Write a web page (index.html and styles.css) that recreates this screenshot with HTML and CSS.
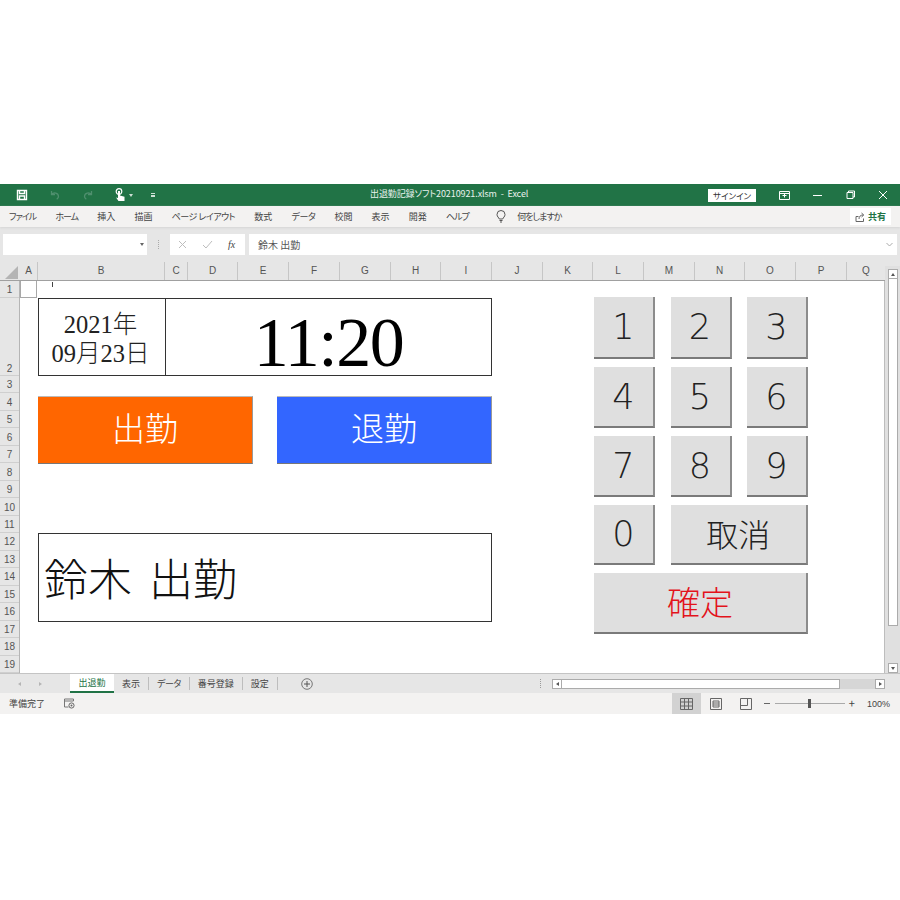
FILE: index.html
```html
<!DOCTYPE html>
<html lang="ja">
<head>
  <meta charset="UTF-8" />
  <title>出退勤記録ソフト</title>
  <link rel="stylesheet" href="styles.css">
</head>
<body>
  <div class="excel">
    <!-- Title bar -->
    <div class="titlebar">
      <div class="qat">
        <svg class="qat-save" width="12" height="12" viewBox="0 0 12 12"><path d="M1.5 1.5h9v9h-9z M3.5 1.5v3h5v-3 M3.5 10.5v-3.5h5v3.5" fill="none" stroke="#fff" stroke-width="1.4"/></svg>
        <svg class="qat-undo" width="12" height="12" viewBox="0 0 12 12"><path d="M2.5 2v3.5h3.5 M2.7 5.3c2-2.3 6.6-1.5 6.8 2 .1 1.500-.8 2.400-1.800 3" fill="none" stroke="#4f8f6e" stroke-width="1.300"/></svg>
        <svg class="qat-redo" width="12" height="12" viewBox="0 0 12 12"><path d="M9.500 2v3.500H6 M9.300 5.300c-2-2.300-6.600-1.500-6.800 2-.1 1.500.8 2.400 1.800 3" fill="none" stroke="#4f8f6e" stroke-width="1.300"/></svg>
        <svg class="qat-touch" width="12" height="14" viewBox="0 0 12 14"><circle cx="5" cy="3.500" r="2.800" fill="none" stroke="#fff" stroke-width="1.200"/><path d="M4 3h2v4.500l4.500 1.200V13H4.500L2 9.500l2 .6z" fill="#fff"/></svg>
        <span class="qat-caret"></span>
        <span class="qat-more"></span>
      </div>
      <div class="doc-title">出退勤記録ソフト20210921.xlsm&nbsp; -&nbsp; Excel</div>
      <div class="win-controls">
        <span class="signin">サインイン</span>
        <svg class="win-display" width="11" height="10" viewBox="0 0 11 10"><path d="M.5 1.500h10v8H.5z M.5 3.500h10 M5.500 3.500v4 M3.500 5.500h4" fill="none" stroke="#fff"/></svg>
        <svg class="win-min" width="10" height="10" viewBox="0 0 10 10"><path d="M0 5.500h9" stroke="#fff"/></svg>
        <svg class="win-restore" width="10" height="10" viewBox="0 0 10 10"><path d="M1 2.500h6v6H1z M2.500 2.500V1h6v6H7" fill="none" stroke="#fff"/></svg>
        <svg class="win-close" width="10" height="10" viewBox="0 0 10 10"><path d="M1 1l8 8M9 1L1 9" stroke="#fff"/></svg>
      </div>
    </div>

    <!-- Ribbon tabs -->
    <div class="ribbon">
      <a class="kana">ファイル</a>
      <a class="kana">ホーム</a>
      <a>挿入</a>
      <a>描画</a>
      <a class="kana-wide">ページ レイアウト</a>
      <a>数式</a>
      <a class="kana-wide">データ</a>
      <a>校閲</a>
      <a>表示</a>
      <a>開発</a>
      <a class="kana">ヘルプ</a>
      <svg class="bulb" width="10" height="13" viewBox="0 0 10 13"><path d="M3.300 9C2.800 7.500 1 6.700 1 4.500a4 4 0 0 1 8 0C9 6.700 7.200 7.500 6.700 9z M3.500 10.500h3 M4 12h2" fill="none" stroke="#555"/></svg>
      <span class="tell-me kana">何をしますか</span>
      <span class="share">
        <svg width="10" height="10" viewBox="0 0 10 10"><path d="M1 4.500v5h7.500v-3 M1 4.500h2.500 M4 7c0-2.500 1.500-4 4-4 M6.500 1L8.800 3 6.500 5" fill="none" stroke="#666"/></svg>
        <b>共有</b>
      </span>
    </div>

    <!-- Formula bar -->
    <div class="formula-bar">
      <div class="name-box"><span class="caret-down"></span></div>
      <span class="fb-dots"></span>
      <div class="fx-box">
        <svg width="9" height="9" viewBox="0 0 9 9"><path d="M1 1l7 7M8 1L1 8" stroke="#bdbdbd"/></svg>
        <svg width="11" height="9" viewBox="0 0 11 9"><path d="M1 5l3 3 6-7" fill="none" stroke="#bdbdbd"/></svg>
        <i>fx</i>
      </div>
      <div class="formula-input">
        鈴木 出勤
        <svg width="7" height="5" viewBox="0 0 7 5"><path d="M.5 1l3 3 3-3" fill="none" stroke="#aaa"/></svg>
      </div>
    </div>

    <!-- Column headers -->
    <div class="col-head">
      <div class="corner"></div>
      <div class="col">A</div><div class="col">B</div><div class="col">C</div><div class="col">D</div>
      <div class="col">E</div><div class="col">F</div><div class="col">G</div><div class="col">H</div>
      <div class="col">I</div><div class="col">J</div><div class="col">K</div><div class="col">L</div>
      <div class="col">M</div><div class="col">N</div><div class="col">O</div><div class="col">P</div>
      <div class="col">Q</div>
    </div>

    <div class="sheet-row">
      <div class="row-head">
        <div>1</div><div class="tall">2</div><div>3</div><div>4</div><div>5</div><div>6</div><div>7</div>
        <div>8</div><div>9</div><div>10</div><div>11</div><div>12</div><div>13</div><div>14</div>
        <div>15</div><div>16</div><div>17</div><div>18</div><div>19</div>
      </div>

      <div class="sheet">
        <div class="active-cell"></div>
        <div class="cursor-tick"></div>

        <div class="left-panel">
          <div class="clock-box">
            <div class="date">2021年<br>09月23日</div>
            <div class="time">11:20</div>
          </div>
          <div class="punch-buttons">
            <div class="punch punch-in">出勤</div>
            <div class="punch punch-out">退勤</div>
          </div>
          <div class="message">鈴木 出勤</div>
        </div>

        <div class="keypad">
          <div class="key">1</div>
          <div class="key">2</div>
          <div class="key">3</div>
          <div class="key">4</div>
          <div class="key">5</div>
          <div class="key">6</div>
          <div class="key">7</div>
          <div class="key">8</div>
          <div class="key">9</div>
          <div class="key">0</div>
          <div class="key key-text key-cancel">取消</div>
          <div class="key key-text key-ok">確定</div>
        </div>
      </div>

      <div class="vscroll">
        <div class="sb-btn"><span class="arrow-up"></span></div>
        <div class="vthumb"></div>
        <div class="sb-btn"><span class="arrow-down"></span></div>
      </div>
    </div>

    <!-- Sheet tabs -->
    <div class="tabs-bar">
      <div class="tab-nav"><span class="nav-left"></span><span class="nav-right"></span></div>
      <div class="tab active">出退勤</div>
      <div class="tab">表示</div>
      <div class="tab tab-kana">データ</div>
      <div class="tab">番号登録</div>
      <div class="tab">設定</div>
      <svg class="add-sheet" width="12" height="12" viewBox="0 0 12 12"><circle cx="6" cy="6" r="5.300" fill="none" stroke="#777"/><path d="M6 3v6M3 6h6" stroke="#555"/></svg>
      <span class="tab-dots"></span>
      <div class="hscroll">
        <div class="sb-btn"><span class="arrow-left"></span></div>
        <div class="hthumb"></div>
        <div class="sb-btn"><span class="arrow-right"></span></div>
      </div>
    </div>

    <!-- Status bar -->
    <div class="status">
      <span class="ready">準備完了</span>
      <svg class="macro" width="11" height="11" viewBox="0 0 11 11"><path d="M.5 1h9v2h-9z M.5 3v6h4" fill="none" stroke="#777"/><circle cx="7.500" cy="7.500" r="2.600" fill="none" stroke="#666"/><circle cx="7.500" cy="7.500" r="1" fill="#666"/></svg>
      <div class="view-btn on">
        <svg width="13" height="12" viewBox="0 0 13 12"><path d="M.5.500h12v11H.5z M.5 4h12 M.5 8h12 M4.500.500v11 M8.500.500v11" fill="none" stroke="#666"/></svg>
      </div>
      <div class="view-btn">
        <svg width="12" height="12" viewBox="0 0 12 12"><path d="M.5.500h11v11H.5z M3 3h6v6H3z M3 5h6 M3 7h6" fill="none" stroke="#666"/></svg>
      </div>
      <div class="view-btn">
        <svg width="12" height="12" viewBox="0 0 12 12"><path d="M.5.500h11v11H.5z M.5 7.500h7V.500" fill="none" stroke="#666"/></svg>
      </div>
      <div class="zoom">
        <span class="zoom-minus"></span>
        <div class="zoom-track"><span class="zoom-thumb"></span></div>
        <span class="zoom-plus">+</span>
      </div>
      <span class="zoom-pct">100%</span>
    </div>
  </div>
</body>
</html>
```

FILE: styles.css
```css
/* Reset and base */
* {
  box-sizing: border-box;
  margin: 0;
  padding: 0;
}
body {
  font-family: "Noto Sans CJK JP", "Liberation Sans", sans-serif;
  background: #fff;
  color: #444;
  font-size: 9px;
  font-feature-settings: "palt";
}
svg {
  display: block;
  flex-shrink: 0;
}

.excel {
  margin-top: 184px;
  height: 530px;
  display: flex;
  flex-direction: column;
}

/* Title bar */
.titlebar {
  height: 22px;
  background: #217346;
  color: #fff;
  position: relative;
  display: flex;
  align-items: center;
  flex-shrink: 0;
}
.qat {
  display: flex;
  align-items: center;
  padding-left: 16px;
}
.qat-undo {
  margin-left: 21px;
}
.qat-redo {
  margin-left: 21px;
}
.qat-touch {
  margin-left: 20px;
}
.qat-caret {
  margin-left: 3px;
  border: 2px solid transparent;
  border-top: 3px solid #cfe0d6;
  border-bottom: 0;
}
.qat-more {
  margin-left: 18px;
  width: 4px;
  height: 4px;
  border-top: 1px solid #cfe0d6;
  border-bottom: 2px solid #cfe0d6;
}
.doc-title {
  position: absolute;
  left: 370px;
  top: 0;
  line-height: 19px;
  white-space: nowrap;
  color: #e8f1ec;
  letter-spacing: -0.1px;
}
.win-controls {
  margin-left: auto;
  display: flex;
  align-items: center;
}
.signin {
  width: 48px;
  height: 13px;
  background: #fff;
  color: #333;
  text-align: center;
  line-height: 13px;
  font-size: 8.500px;
}
.win-display {
  margin-left: 23px;
}
.win-min {
  margin-left: 23px;
}
.win-restore {
  margin-left: 23px;
}
.win-close {
  margin-left: 22px;
  margin-right: 12px;
}

/* Ribbon */
.ribbon {
  height: 21px;
  background: #f3f2f1;
  display: flex;
  align-items: center;
  gap: 19.200px;
  padding-left: 9px;
  flex-shrink: 0;
  box-shadow: 0 1px 2px #d5d5d5;
  position: relative;
}
.kana {
  letter-spacing: -1px;
}
.kana-wide {
  letter-spacing: -0.5px;
}
.bulb {
  margin-left: 8px;
}
.tell-me {
  margin-left: -8px;
}
.share {
  margin-left: auto;
  margin-right: 9px;
  width: 41px;
  height: 17px;
  background: #fff;
  display: flex;
  align-items: center;
  justify-content: center;
  gap: 3px;
}
.share b {
  color: #217346;
  font-size: 9px;
}

/* Formula bar */
.formula-bar {
  height: 35px;
  background: #e6e6e6;
  display: flex;
  align-items: center;
  padding: 0 3px;
  flex-shrink: 0;
}
.name-box {
  width: 144px;
  height: 21px;
  background: #fff;
  display: flex;
  align-items: center;
  justify-content: flex-end;
  padding-right: 3px;
}
.caret-down {
  border: 2.500px solid transparent;
  border-top: 3px solid #666;
  border-bottom: 0;
}
.fb-dots {
  width: 1px;
  height: 9px;
  margin: 0 11px;
  border-left: 1px dotted #aaa;
}
.fx-box {
  width: 75px;
  height: 21px;
  background: #fff;
  display: flex;
  align-items: center;
  gap: 15px;
  padding-left: 8px;
}
.fx-box i {
  font-family: "Liberation Serif", serif;
  font-size: 10px;
  color: #444;
}
.formula-input {
  margin-left: 4px;
  flex: 1;
  height: 21px;
  background: #fff;
  display: flex;
  align-items: center;
  justify-content: space-between;
  padding: 0 4px 0 9px;
  font-size: 10px;
  color: #555;
}

/* Column and row headers */
.col-head {
  height: 19px;
  background: #e6e6e6;
  border-bottom: 1px solid #a0a0a0;
  display: grid;
  grid-template-columns: 20px 18px 127px 23px 50px 51px 51px 51px 50px 51px 51px 50px 51px 51px 50px 51px 51px 38px;
  flex-shrink: 0;
}
.corner {
  position: relative;
  overflow: hidden;
}
.corner::after {
  content: "";
  position: absolute;
  right: 2px;
  bottom: 1px;
  border-left: 13px solid transparent;
  border-bottom: 13px solid #b4b4b4;
}
.col {
  font-family: "Liberation Sans", sans-serif;
  font-size: 10px;
  color: #555;
  text-align: center;
  line-height: 18px;
  border-right: 1px solid #c6c6c6;
}
.col:nth-child(n+18) {
  border-right: 0;
}
.sheet-row {
  flex: 1;
  display: flex;
  min-height: 0;
}
.row-head {
  width: 20px;
  background: #e6e6e6;
  border-right: 1px solid #b5b5b5;
  display: grid;
  grid-template-rows: 17px 78px repeat(17, 17.470px);
  font-family: "Liberation Sans", sans-serif;
  font-size: 10px;
  color: #555;
  text-align: center;
  flex-shrink: 0;
}
.row-head div {
  border-bottom: 1px solid #cfcfcf;
  display: flex;
  align-items: center;
  justify-content: center;
  padding-top: 1px;
}
.row-head .tall {
  align-items: flex-end;
  padding: 0 0 1px;
}

/* Sheet shapes */
.sheet {
  flex: 1;
  position: relative;
  display: flex;
  background: #fff;
  padding: 17px 0 0 18px;
  border-right: 1px solid #bdbdbd;
}
.active-cell {
  position: absolute;
  left: 0;
  top: 0;
  width: 17px;
  height: 17px;
  border: 1px solid #a8a8a8;
  border-top: 0;
}
.cursor-tick {
  position: absolute;
  left: 32px;
  top: 1px;
  width: 1px;
  height: 5px;
  background: #444;
}
.left-panel {
  width: 454px;
}
.clock-box {
  height: 78px;
  border: 1px solid #333;
  display: flex;
  font-family: "Liberation Serif", "Noto Sans CJK JP", serif;
  color: #222;
}
.date {
  width: 127px;
  border-right: 1px solid #333;
  font-size: 24.500px;
  line-height: 29px;
  text-align: center;
  padding: 11px 3px 0 0;
  font-weight: 300;
  font-feature-settings: normal;
}
.time {
  flex: 1;
  text-align: center;
  font-size: 70px;
  letter-spacing: -1.500px;
  line-height: 88px;
  color: #000;
}
.punch-buttons {
  display: flex;
  justify-content: space-between;
  margin-top: 20px;
}
.punch {
  width: 215px;
  height: 68px;
  color: #fff;
  font-family: "Liberation Serif", "Noto Sans CJK JP", serif;
  font-size: 33px;
  font-weight: 300;
  line-height: 66px;
  text-align: center;
  border-right: 1px solid #999;
  border-bottom: 1px solid #777;
  border-top: 1px solid #bbb;
}
.punch-in {
  background: #ff6600;
}
.punch-out {
  background: #3366ff;
}
.message {
  margin-top: 69px;
  height: 89px;
  border: 1px solid #333;
  font-family: "Liberation Serif", "Noto Sans CJK JP", serif;
  font-size: 44px;
  font-weight: 300;
  line-height: 90px;
  padding: 3px 0 0 5px;
  color: #111;
  word-spacing: 6px;
}

/* Keypad */
.keypad {
  margin-left: 102px;
  width: 215px;
  height: 337px;
  margin-top: -1px;
  display: grid;
  grid-template-columns: 61px 61px 61px;
  grid-template-rows: 62px 61px 61px 60px 61px;
  column-gap: 15.500px;
  row-gap: 8px;
}
.key {
  background: #dfdfdf;
  border-right: 2px solid #8c8c8c;
  border-bottom: 2px solid #7a7a7a;
  font-family: "DejaVu Sans", "Noto Sans CJK JP", sans-serif;
  font-weight: 200;
  font-size: 35px;
  color: #222;
  display: flex;
  align-items: center;
  justify-content: center;
}
.key-text {
  font-size: 32px;
  font-family: "Liberation Serif", "Noto Sans CJK JP", serif;
  font-weight: 300;
  padding-bottom: 3px;
}
.key-cancel {
  grid-column: 2 / 4;
}
.key-ok {
  grid-column: 1 / 4;
  color: #e3131b;
  font-size: 33px;
}

/* Scrollbars */
.sb-btn {
  width: 10px;
  height: 10px;
  background: #fff;
  border: 1px solid #ababab;
  display: flex;
  align-items: center;
  justify-content: center;
  flex-shrink: 0;
}
.vscroll {
  width: 15px;
  margin-top: -15px;
  position: relative;
  background: #e0e0e0;
  display: flex;
  flex-direction: column;
  align-items: center;
  padding-top: 3px;
}
.vthumb {
  width: 10px;
  height: 347px;
  background: #fff;
  border: 1px solid #ababab;
  border-top: 0;
}
.vscroll .sb-btn:last-child {
  margin-top: auto;
}
.arrow-up {
  border: 2.500px solid transparent;
  border-bottom: 3px solid #555;
  border-top: 0;
}
.arrow-down {
  border: 2.500px solid transparent;
  border-top: 3px solid #555;
  border-bottom: 0;
}
.arrow-left {
  border: 2.500px solid transparent;
  border-right: 3px solid #555;
  border-left: 0;
}
.arrow-right {
  border: 2.500px solid transparent;
  border-left: 3px solid #555;
  border-right: 0;
}

/* Sheet tabs */
.tabs-bar {
  height: 20px;
  background: #e6e6e6;
  border-top: 1px solid #c4c4c4;
  display: flex;
  align-items: center;
  flex-shrink: 0;
}
.tab-nav {
  width: 70px;
  display: flex;
  gap: 18px;
  padding-left: 18px;
}
.nav-left {
  border: 2.500px solid transparent;
  border-right: 3px solid #b5b5b5;
  border-left: 0;
}
.nav-right {
  border: 2.500px solid transparent;
  border-left: 3px solid #b5b5b5;
  border-right: 0;
}
.tab {
  height: 13px;
  line-height: 13px;
  padding: 0 8px;
  border-right: 1px solid #bdbdbd;
}
.tab-kana {
  letter-spacing: -0.5px;
}
.tab.active {
  height: 19px;
  width: 44px;
  line-height: 17px;
  padding: 0;
  text-align: center;
  background: #fff;
  color: #217346;
  border-right: 0;
  border-bottom: 2px solid #217346;
}
.add-sheet {
  margin-left: 23px;
}
.tab-dots {
  margin-left: auto;
  width: 1px;
  height: 9px;
  border-left: 1px dotted #999;
}
.hscroll {
  width: 333px;
  margin-left: 11px;
  margin-right: 15px;
  display: flex;
  align-items: center;
  background: #d6d6d6;
}
.hthumb {
  width: 278px;
  height: 10px;
  background: #fff;
  border: 1px solid #ababab;
  border-left: 0;
  margin-right: auto;
}

/* Status bar */
.status {
  height: 21px;
  flex-shrink: 0;
  background: #f3f2f1;
  display: flex;
  align-items: center;
  padding-left: 9px;
}
.ready {
  width: 55px;
}
.view-btn {
  width: 29.500px;
  height: 100%;
  display: flex;
  align-items: center;
  justify-content: center;
}
.view-btn.on {
  background: #d2d2d2;
  margin-left: auto;
}
.zoom {
  margin-left: 3.500px;
  display: flex;
  align-items: center;
  gap: 3px;
}
.zoom-minus {
  width: 6px;
  height: 1px;
  background: #666;
}
.zoom-track {
  width: 70px;
  height: 1px;
  background: #aaa;
  position: relative;
  margin-left: 2px;
}
.zoom-thumb {
  position: absolute;
  left: 33px;
  top: -4px;
  width: 3px;
  height: 9px;
  background: #555;
}
.zoom-plus {
  font-size: 11px;
  line-height: 11px;
  margin-left: 1px;
}
.zoom-pct {
  font-family: "Liberation Sans", sans-serif;
  margin-left: 12px;
  margin-right: 10px;
}
```
